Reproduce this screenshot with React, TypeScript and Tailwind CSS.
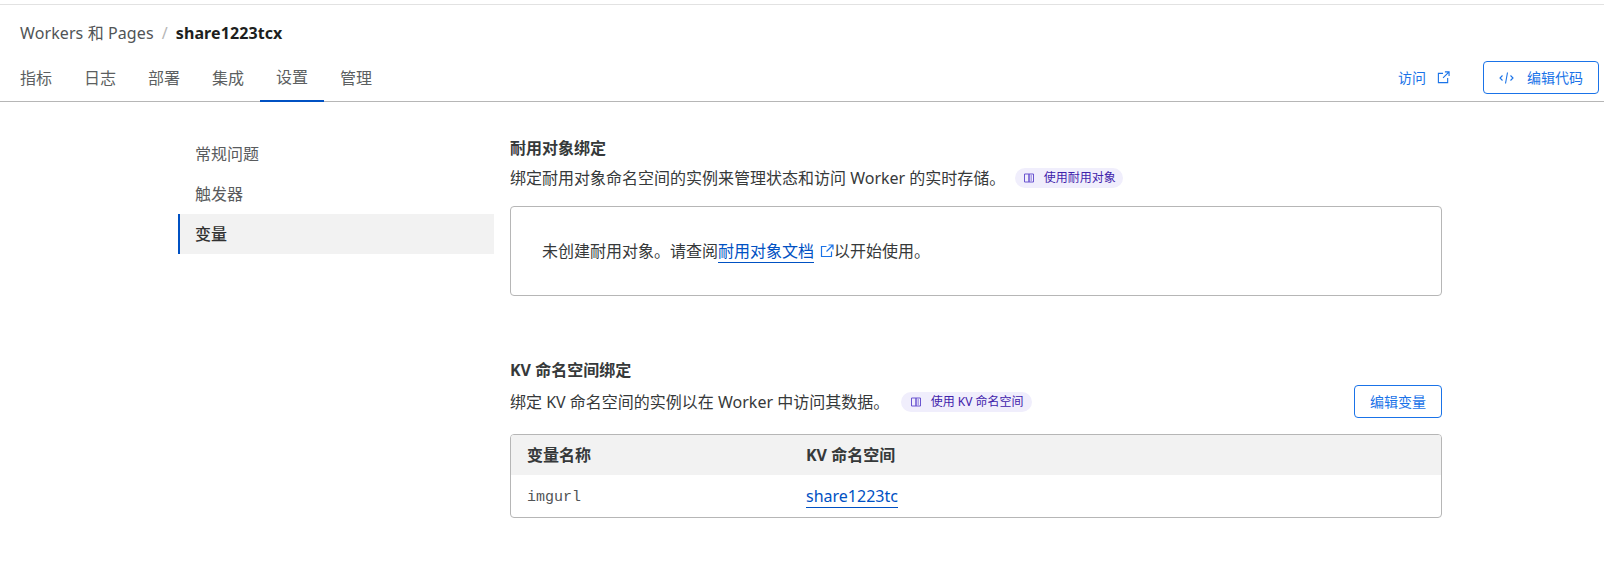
const TABS = ["指标", "日志", "部署", "集成", "设置", "管理"];
const SIDE_ITEMS = ["常规问题", "触发器", "变量"];

function BookIcon() {
  return (
    <svg width="12" height="12" viewBox="0 0 12 12" fill="none" stroke="currentColor" strokeWidth="1" className="shrink-0">
      <path d="M1.5 2h4.5v8H1.5zM6 2h4.5v8H6z" />
      <path d="M7.5 4h1.5M7.5 6h1.5M7.5 8h1.5" />
    </svg>
  );
}

function CodeIcon() {
  return (
    <svg width="15" height="14" viewBox="0 0 15 14" fill="none" stroke="currentColor" strokeWidth="1.1" className="shrink-0">
      <path d="M3.5 4.5 1 7l2.5 2.5M11.5 4.5 14 7l-2.5 2.5M8.5 1.5l-2 11" />
    </svg>
  );
}

function LinkOutIcon({ className }: { className: string }) {
  return (
    <svg viewBox="0 0 14 14" fill="none" stroke="currentColor" strokeWidth="1.2" className={`shrink-0 ${className}`}>
      <path d="M6.5 2.5H1.5v10h10V7.5" />
      <path d="M8.5 1h4.5v4.5M13 1 6.5 7.5" />
    </svg>
  );
}

function DocBadge({ label, width }: { label: string; width: string }) {
  return (
    <span className={`inline-flex h-5 items-center justify-center gap-[9px] rounded-full bg-[#f0eefc] text-xs text-[#3f22ab] ${width}`}>
      <span className="text-[#6a55d0]">
        <BookIcon />
      </span>
      {label}
    </span>
  );
}

export default function App() {
  return (
    <div
      className="h-[583px] w-[1604px] overflow-hidden bg-white text-[#36393a]"
      style={{ fontFamily: '"Noto Sans", "Noto Sans CJK SC", sans-serif' }}
    >
      <div className="h-[5px] border-b border-[#e2e2e2]" />
      <header className="h-[97px] border-b border-[#b6b6b6]">
        <div className="flex h-[56px] items-center pb-[1px] pl-5 text-base tracking-[0.1px]">
          <span className="text-[#515456]">Workers 和 Pages</span>
          <span className="mx-2 text-[#b6b6b6]">/</span>
          <span className="font-bold text-[#1d1f20]">share1223tcx</span>
        </div>
        <div className="flex h-[41px] items-start justify-between pr-[5px]">
          <nav className="flex pl-1">
            {TABS.map((tab) => (
              <span
                key={tab}
                className={`flex h-[41px] w-16 items-center justify-center pb-[7px] text-base text-[#5c5f61] ${
                  tab === "设置" ? "border-b-2 border-[#0051c3]" : ""
                }`}
              >
                {tab}
              </span>
            ))}
          </nav>
          <div className="flex items-center">
            <a className="mr-[33px] flex items-center gap-[11px] text-sm text-[#1a73e8]">
              访问
              <LinkOutIcon className="h-[13px] w-[13px]" />
            </a>
            <button className="flex h-[33px] w-[116px] items-center justify-center gap-[13px] rounded-[4px] border border-[#1a73e8] text-sm text-[#1a73e8]">
              <CodeIcon />
              编辑代码
            </button>
          </div>
        </div>
      </header>
      <div className="flex pl-[178px] pt-[32px]">
        <aside className="w-[316px] shrink-0">
          {SIDE_ITEMS.map((item) => (
            <div
              key={item}
              className={`flex h-10 items-center text-base ${
                item === "变量"
                  ? "border-l-2 border-[#0051c3] bg-[#f2f2f2] pl-[15px] font-medium text-[#313131]"
                  : "pl-[17px] text-[#595b5d]"
              }`}
            >
              {item}
            </div>
          ))}
        </aside>
        <main className="ml-4 w-[932px] pt-[2px]">
          <section>
            <h2 className="text-base font-bold leading-6">耐用对象绑定</h2>
            <div className="mt-[6px] flex h-6 items-center text-base">
              绑定耐用对象命名空间的实例来管理状态和访问 Worker 的实时存储。
              <span className="ml-[10px]">
                <DocBadge label="使用耐用对象" width="w-[108px]" />
              </span>
            </div>
            <div className="mt-[16px] flex h-[90px] items-center rounded-[4px] border border-[#b6b6b6] pl-[31px] pr-8 text-base">
              未创建耐用对象。请查阅
              <a className="border-b border-[#0051c3] leading-[22px] text-[#0051c3]">耐用对象文档</a>
              <LinkOutIcon className="ml-[6px] h-[14px] w-[14px] text-[#1a73e8]" />
              以开始使用。
            </div>
          </section>
          <section className="mt-[62px]">
            <h2 className="text-base font-bold leading-6">KV 命名空间绑定</h2>
            <div className="mt-[3px] flex h-[33px] items-center justify-between">
              <div className="flex items-center text-base">
                绑定 KV 命名空间的实例以在 Worker 中访问其数据。
                <span className="ml-3">
                  <DocBadge label="使用 KV 命名空间" width="w-[131px]" />
                </span>
              </div>
              <button className="h-[33px] w-[88px] rounded-[4px] border border-[#1a73e8] text-sm text-[#1a73e8]">
                编辑变量
              </button>
            </div>
            <div className="mt-[16px] overflow-hidden rounded-[4px] border border-[#b6b6b6]">
              <div className="flex h-10 items-center bg-[#f2f2f2] text-base font-bold">
                <span className="w-[295px] pl-4">变量名称</span>
                <span>KV 命名空间</span>
              </div>
              <div className="flex h-[42px] items-center">
                <span className="w-[295px] pl-4 pt-[5px] text-[15px] text-[#515456]" style={{ fontFamily: '"Liberation Mono", monospace' }}>
                  imgurl
                </span>
                <a className="border-b border-[#0051c3] text-base leading-[22px] text-[#0051c3]">share1223tc</a>
              </div>
            </div>
          </section>
        </main>
      </div>
    </div>
  );
}
